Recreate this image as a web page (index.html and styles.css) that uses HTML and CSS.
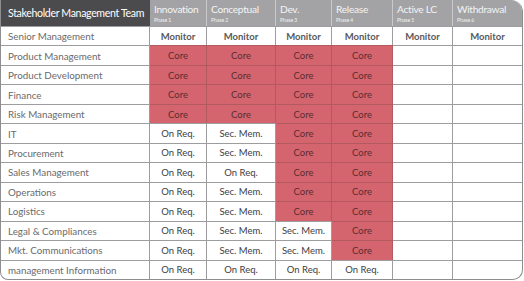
FILE: index.html
```html
<!DOCTYPE html>
<html>
<head>
<meta charset="utf-8">
<link rel="stylesheet" href="styles.css">
</head>
<body>
<div class="matrix">
  <div class="hd team">Stakeholder Management Team</div>
  <div class="hd phase"><span class="pt">Innovation</span><span class="ps">Phase 1</span></div>
  <div class="hd phase"><span class="pt">Conceptual</span><span class="ps">Phase 2</span></div>
  <div class="hd phase"><span class="pt">Dev.</span><span class="ps">Phase 3</span></div>
  <div class="hd phase"><span class="pt">Release</span><span class="ps">Phase 4</span></div>
  <div class="hd phase"><span class="pt">Active LC</span><span class="ps">Phase 5</span></div>
  <div class="hd phase last"><span class="pt">Withdrawal</span><span class="ps">Phase 6</span></div>

  <div class="name">Senior Management</div>
  <div class="v mon">Monitor</div><div class="v mon">Monitor</div><div class="v mon">Monitor</div><div class="v mon">Monitor</div><div class="v mon">Monitor</div><div class="v mon last">Monitor</div>

  <div class="name">Product Management</div>
  <div class="v core">Core</div><div class="v core">Core</div><div class="v core">Core</div><div class="v core">Core</div><div class="v"></div><div class="v last"></div>

  <div class="name">Product Development</div>
  <div class="v core">Core</div><div class="v core">Core</div><div class="v core">Core</div><div class="v core">Core</div><div class="v"></div><div class="v last"></div>

  <div class="name">Finance</div>
  <div class="v core">Core</div><div class="v core">Core</div><div class="v core">Core</div><div class="v core">Core</div><div class="v"></div><div class="v last"></div>

  <div class="name">Risk Management</div>
  <div class="v core">Core</div><div class="v core">Core</div><div class="v core">Core</div><div class="v core">Core</div><div class="v"></div><div class="v last"></div>

  <div class="name">IT</div>
  <div class="v">On Req.</div><div class="v">Sec. Mem.</div><div class="v core">Core</div><div class="v core">Core</div><div class="v"></div><div class="v last"></div>

  <div class="name">Procurement</div>
  <div class="v">On Req.</div><div class="v">Sec. Mem.</div><div class="v core">Core</div><div class="v core">Core</div><div class="v"></div><div class="v last"></div>

  <div class="name">Sales Management</div>
  <div class="v">On Req.</div><div class="v">On Req.</div><div class="v core">Core</div><div class="v core">Core</div><div class="v"></div><div class="v last"></div>

  <div class="name">Operations</div>
  <div class="v">On Req.</div><div class="v">Sec. Mem.</div><div class="v core">Core</div><div class="v core">Core</div><div class="v"></div><div class="v last"></div>

  <div class="name">Logistics</div>
  <div class="v">On Req.</div><div class="v">Sec. Mem.</div><div class="v core">Core</div><div class="v core">Core</div><div class="v"></div><div class="v last"></div>

  <div class="name">Legal &amp; Compliances</div>
  <div class="v">On Req.</div><div class="v">Sec. Mem.</div><div class="v">Sec. Mem.</div><div class="v core">Core</div><div class="v"></div><div class="v last"></div>

  <div class="name">Mkt. Communications</div>
  <div class="v">On Req.</div><div class="v">Sec. Mem.</div><div class="v">Sec. Mem.</div><div class="v core">Core</div><div class="v"></div><div class="v last"></div>

  <div class="name">management Information</div>
  <div class="v">On Req.</div><div class="v">On Req.</div><div class="v">On Req.</div><div class="v">On Req.</div><div class="v"></div><div class="v last"></div>
</div>
</body>
</html>
```

FILE: styles.css
```css
html, body {
  margin: 0;
  padding: 0;
  background: #ffffff;
}

.matrix {
  width: 523px;
  height: 280px;
  box-sizing: border-box;
  border: 1px solid #8e8e90;
  border-top: none;
  border-radius: 0 12px 10px 8px;
  overflow: hidden;
  display: grid;
  grid-template-columns: 149px 57px 69px 56px 61px 60px 1fr;
  grid-template-rows: 26px repeat(13, 1fr);
  font-family: "Lato", "Liberation Sans", sans-serif;
}

.hd {
  color: #f4f4f4;
  border-right: 1px solid #c9c9cb;
  box-sizing: border-box;
  white-space: nowrap;
  overflow: hidden;
}

.team {
  background: #4b4b4d;
  color: #ffffff;
  font-size: 10.6px;
  letter-spacing: -0.35px;
  display: flex;
  align-items: center;
  padding-left: 7px;
  border-right: none;
}

.phase {
  background: #a3a3a6;
  display: flex;
  flex-direction: column;
  padding: 3px 0 0 4px;
}

.phase.last {
  border-right: none;
}

.pt {
  font-size: 10.2px;
  letter-spacing: -0.3px;
  line-height: 12px;
}

.ps {
  font-size: 5px;
  line-height: 6px;
  margin-top: 2px;
}

.name, .v {
  border-top: 1px solid #9d9d9f;
  box-sizing: border-box;
  display: flex;
  align-items: center;
  white-space: nowrap;
}

.name {
  color: #6a6a6c;
  font-size: 9.8px;
  padding-left: 7px;
  border-right: 1px solid #9d9d9f;
}

.v {
  justify-content: center;
  color: #3d3d3f;
  font-size: 9.5px;
  border-right: 1px solid #9d9d9f;
}

.v.last {
  border-right: none;
}

.mon {
  font-weight: 700;
  color: #59595b;
}

.core {
  background: #d4656e;
  color: #5b2c30;
  border-top-color: #b25a60;
  border-right-color: #b25a60;
}
```
